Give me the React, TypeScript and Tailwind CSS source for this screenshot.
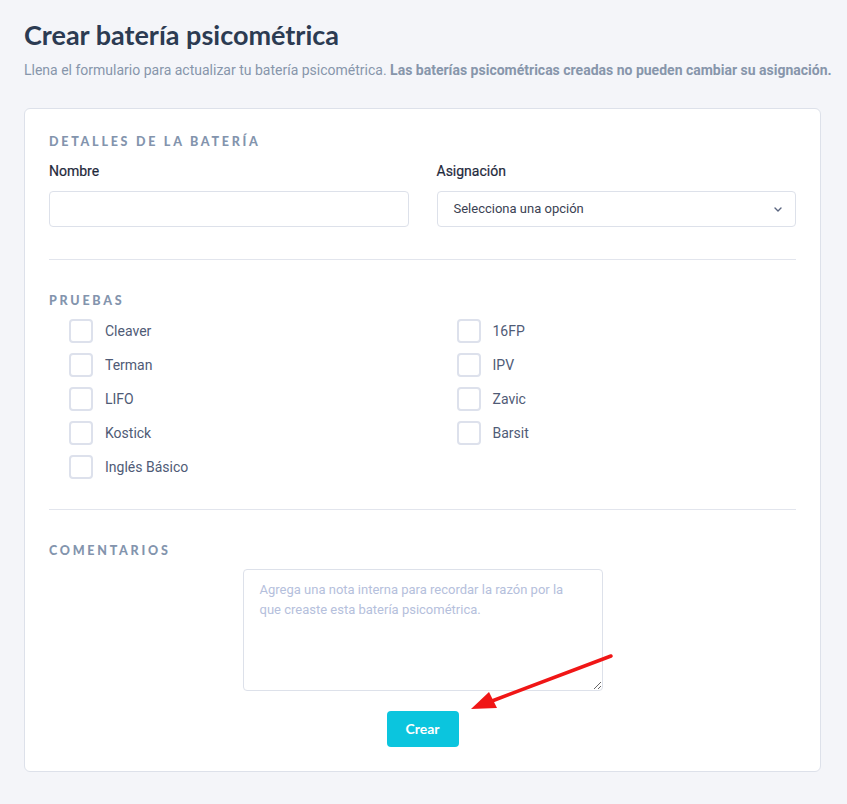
import React from "react";

const left = ["Cleaver", "Terman", "LIFO", "Kostick", "Inglés Básico"];
const right = ["16FP", "IPV", "Zavic", "Barsit"];

function Check({ label }: { label: string }) {
  return (
    <label className="flex items-center h-6 gap-3">
      <span className="w-6 h-6 rounded border-2 border-[#dde1ec] bg-white" />
      <span className="text-sm text-[#4f5b76]">{label}</span>
    </label>
  );
}

function Heading({ children }: { children: React.ReactNode }) {
  return (
    <h3 className="font-['Lato',sans-serif] text-[12.5px] font-black tracking-[0.22em] text-[#8394ad] uppercase leading-4">
      {children}
    </h3>
  );
}

export default function App() {
  return (
    <div className="min-h-screen bg-[#f4f5f9] px-6 pt-[17px] pb-8 font-['Roboto',sans-serif] relative">
      <h1 className="font-['Lato',sans-serif] text-[27px] font-bold text-[#2c3b52] leading-9">
        Crear batería psicométrica
      </h1>
      <p className="mt-[7px] text-sm text-[#8796ab] leading-5 whitespace-nowrap">
        Llena el formulario para actualizar tu batería psicométrica.{" "}
        <span className="font-bold">Las baterías psicométricas creadas no pueden cambiar su asignación.</span>
      </p>

      <div className="mt-[28px] w-[797px] bg-white border border-[#dde1ea] rounded-md px-6 pt-[25px] pb-6">
        <Heading>Detalles de la batería</Heading>
        <div className="grid grid-cols-2 gap-7 mt-[11px]">
          <div>
            <label className="block text-sm text-[#1f2a3c] leading-5 [-webkit-text-stroke:0.2px_#1f2a3c]">Nombre</label>
            <input className="mt-[10px] w-full h-9 rounded border border-[#dde1ea] bg-white px-4 text-sm" />
          </div>
          <div>
            <label className="block text-sm text-[#1f2a3c] leading-5 [-webkit-text-stroke:0.2px_#1f2a3c]">Asignación</label>
            <div className="mt-[10px] h-9 rounded border border-[#dde1ea] bg-white px-4 flex items-center justify-between">
              <span className="text-[13px] text-[#3b4253]">Selecciona una opción</span>
              <svg width="10" height="10" viewBox="0 0 10 10" className="mr-[-4px]">
                <path d="M2 4l3 3 3-3" fill="none" stroke="#5b6680" strokeWidth="1.4" strokeLinecap="round" strokeLinejoin="round" />
              </svg>
            </div>
          </div>
        </div>

        <div className="h-px bg-[#e2e5ed] mt-8" />

        <div className="mt-[33px]">
          <Heading>Pruebas</Heading>
          <div className="grid grid-cols-2 gap-7 mt-[10px]">
            <div className="flex flex-col gap-[10px] pl-5">
              {left.map((l) => (
                <Check key={l} label={l} />
              ))}
            </div>
            <div className="flex flex-col gap-[10px] pl-5">
              {right.map((l) => (
                <Check key={l} label={l} />
              ))}
            </div>
          </div>
        </div>

        <div className="h-px bg-[#e2e5ed] mt-[30px]" />

        <div className="mt-[33px]">
          <Heading>Comentarios</Heading>
          <div className="flex flex-col items-center mt-[10px]">
            <textarea
              className="w-[360px] h-[122px] rounded border border-[#dde1ea] px-4 py-[10px] text-[13px] leading-5 text-[#2d3748] placeholder:text-[#b5c0dc] resize-y"
              placeholder="Agrega una nota interna para recordar la razón por la que creaste esta batería psicométrica."
            />
            <button className="mt-5 w-[72px] h-9 rounded bg-[#0bc5de] text-white text-sm font-bold font-['Lato',sans-serif]">
              Crear
            </button>
          </div>
        </div>
      </div>

      <svg className="absolute left-0 top-0 pointer-events-none" width="847" height="804">
        <line x1="611" y1="656" x2="492" y2="701" stroke="#f01616" strokeWidth="3.5" strokeLinecap="round" />
        <polygon points="471,709 489,692 497,708" fill="#f01616" />
      </svg>
    </div>
  );
}
